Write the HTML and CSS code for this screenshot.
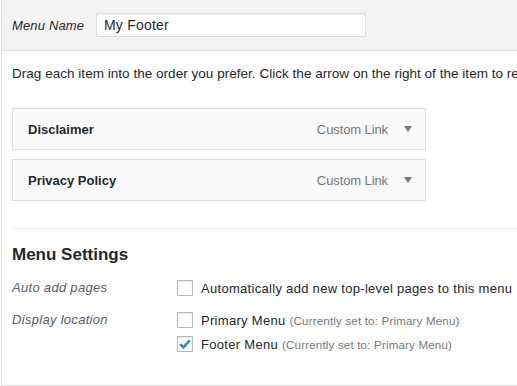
FILE: index.html
```html
<!DOCTYPE html>
<html>
<head>
<meta charset="utf-8">
<link rel="stylesheet" href="styles.css">
</head>
<body>
<div class="wrap">
  <div class="header">
    <label class="name-label">Menu Name</label>
    <input class="name-input" type="text" value="My Footer">
  </div>
  <div class="body">
    <p class="intro">Drag each item into the order you prefer. Click the arrow on the right of the item to reveal additional configuration options.</p>
    <ul class="items">
      <li class="item"><span class="item-title">Disclaimer</span><span class="item-type">Custom Link</span><span class="arrow"></span></li>
      <li class="item"><span class="item-title">Privacy Policy</span><span class="item-type">Custom Link</span><span class="arrow"></span></li>
    </ul>
    <div class="settings">
      <h3 class="settings-title">Menu Settings</h3>
      <div class="row row-auto">
        <div class="row-label">Auto add pages</div>
        <div class="row-fields">
          <div class="field"><span class="cb"></span><span class="field-text">Automatically add new top-level pages to this menu</span></div>
        </div>
      </div>
      <div class="row row-loc">
        <div class="row-label">Display location</div>
        <div class="row-fields">
          <div class="field"><span class="cb"></span><span class="field-text">Primary Menu</span><span class="note">(Currently set to: Primary Menu)</span></div>
          <div class="field"><span class="cb checked"><svg width="16" height="16" viewBox="0 0 16 16"><path d="M3.2 8.2 L6.4 11.4 L12.8 4.2" fill="none" stroke="#1e8cbe" stroke-width="2.4" stroke-linecap="butt" stroke-linejoin="miter"/></svg></span><span class="field-text">Footer Menu</span><span class="note">(Currently set to: Primary Menu)</span></div>
        </div>
      </div>
    </div>
  </div>
  <div class="footer"></div>
</div>
</body>
</html>
```

FILE: styles.css
```css
* { box-sizing: border-box; }
html, body { margin: 0; padding: 0; background: #fff; }
body {
  font-family: "Liberation Sans", Arial, sans-serif;
  font-size: 13px;
  color: #23282d;
  overflow: hidden;
  width: 517px;
  height: 386px;
}
.wrap {
  margin-left: 1px;
  border-left: 1px solid #e2e2e2;
  width: 600px;
  height: 386px;
}
.header {
  height: 51px;
  background: #f3f3f3;
  border-bottom: 1px solid #dedede;
  display: flex;
  align-items: center;
  padding: 0 10px 0;
}
.name-label {
  font-style: italic;
  width: 84px;
  color: #23282d;
  letter-spacing: 0.15px;
}
.name-input {
  width: 270px;
  height: 24px;
  border: 1px solid #ddd;
  box-shadow: inset 0 1px 2px rgba(0,0,0,0.07);
  background: #fff;
  font-family: inherit;
  font-size: 14px;
  letter-spacing: 0.2px;
  color: #23282d;
  padding: 0 7px 1px;
  margin: 0;
}
.body { padding: 13px 0 0 10px; }
.intro {
  margin: 0;
  font-size: 13.5px;
  letter-spacing: 0.03px;
  line-height: 20px;
  white-space: nowrap;
  overflow: hidden;
  width: 505px;
}
.items { list-style: none; margin: 24px 0 0; padding: 0; }
.item {
  width: 414px;
  height: 42px;
  border: 1px solid #dfdfdf;
  background: #fafafa;
  display: flex;
  align-items: center;
  padding: 0 13px 0 15px;
  margin-bottom: 9px;
}
.item-title { font-weight: bold; flex: 1; padding-top: 1px; }
.item-type { color: #72777c; margin-right: 16px; letter-spacing: -0.1px; }
.arrow {
  width: 0; height: 0;
  border-left: 4px solid transparent;
  border-right: 4px solid transparent;
  border-top: 6px solid #7a7a7a;
  margin-top: -1px;
}
.settings {
  margin-top: 27px;
  border-top: 1px solid #eee;
  padding-top: 16px;
}
.settings-title {
  margin: 0;
  font-size: 17px;
  line-height: 20px;
  font-weight: bold;
  color: #23282d;
}
.row { display: flex; }
.row-auto { margin-top: 13px; }
.row-loc { margin-top: 12px; }
.row-label {
  width: 165px;
  font-style: italic;
  color: #555d66;
  line-height: 20px;
  letter-spacing: 0.3px;
}
.row-fields { display: flex; flex-direction: column; gap: 4px; }
.field {
  display: flex;
  align-items: center;
  height: 20px;
  white-space: nowrap;
}
.cb {
  width: 16px;
  height: 16px;
  border: 1px solid #b4b9be;
  background: #fff;
  box-shadow: inset 0 1px 2px rgba(0,0,0,0.1);
  margin-right: 8px;
  position: relative;
  flex: none;
}
.cb svg { position: absolute; left: -1px; top: -1px; }
.field-text { color: #23282d; letter-spacing: 0.3px; }
.note { color: #72777c; font-size: 11.5px; letter-spacing: 0.2px; margin-left: 4px; padding-top: 1px; }
.footer {
  margin-top: 31px;
  border-top: 1px solid #dedede;
}
```
